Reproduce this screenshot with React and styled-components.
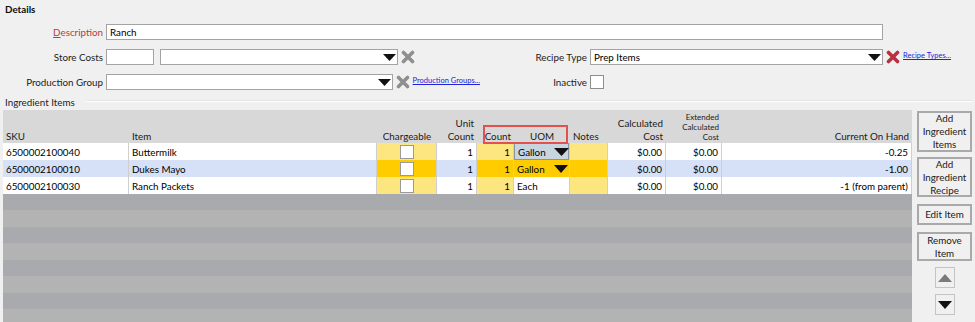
import React from 'react'
import styled, { createGlobalStyle } from 'styled-components'

const GlobalStyle = createGlobalStyle`
  html, body {
    margin: 0;
    padding: 0;
    background: #f0f0f0;
  }
  body {
    font-family: Lato, "Open Sans", sans-serif;
    font-size: 9.8px;
    color: #0d0d0d;
  }
`

const Page = styled.div`
  width: 975px;
  height: 322px;
  overflow: hidden;
  background: #f0f0f0;
  display: flex;
  flex-direction: column;
`

const Heading = styled.div`
  font-weight: 700;
  line-height: 13px;
  height: 13px;
  padding: 3px 0 0 5px;
`

const Form = styled.div`
  display: grid;
  grid-template-columns: 98px 374px 104px 1fr;
  grid-auto-rows: 16px;
  column-gap: 3px;
  row-gap: 9px;
  margin-top: 8px;
  padding-left: 5px;
`

const Label = styled.div`
  display: flex;
  align-items: center;
  justify-content: flex-end;
  white-space: nowrap;
  color: ${({ $accent }) => ($accent ? '#b23c44' : '#222')};
  margin-top: -1px;
`

const Controls = styled.div`
  display: flex;
  align-items: center;
  gap: ${({ $gap }) => $gap ?? 3}px;
  grid-column: ${({ $span }) => $span || 'auto'};
`

const TextBox = styled.div`
  box-sizing: border-box;
  width: ${({ $w }) => $w}px;
  height: 16px;
  background: #fff;
  border: 1px solid #a3a3a3;
  display: flex;
  align-items: center;
  padding: 0 3px;
  color: #000;
`

const ComboArrow = styled.svg`
  margin-left: auto;
  margin-right: -2px;
  flex: none;
`

const Link = styled.a`
  align-self: flex-start;
  margin-top: 2px;
  font-size: 7.5px;
  color: #2222dd;
  text-decoration: underline;
  white-space: nowrap;
`

const CheckBox = styled.div`
  box-sizing: border-box;
  width: 14px;
  height: 14px;
  background: #fff;
  border: 1px solid #8e8e8e;
`

const SectionTitle = styled.div`
  display: flex;
  align-items: center;
  gap: 11px;
  height: 12px;
  margin-top: 6px;
  padding: 0 3px 0 5px;
  color: #222;
  &::after {
    content: '';
    flex: 1;
    height: 1px;
    background: #fff;
    border-top: 1px solid #e4e4e4;
    margin-top: -3px;
  }
`

const Main = styled.div`
  flex: 1;
  min-height: 0;
  display: flex;
  gap: 5px;
  margin-top: 2px;
  padding-left: 3px;
`

const GridBox = styled.div`
  position: relative;
  width: 909px;
  display: flex;
  flex-direction: column;
`

const COLS = '126px 248px 60px 40px 37px 56px 38px 58px 56px 190px'

const HeaderRow = styled.div`
  display: grid;
  grid-template-columns: ${COLS};
  height: 33px;
  background: #d8d8d8;
`

const HeaderCell = styled.div`
  display: flex;
  align-items: flex-end;
  justify-content: ${({ $align }) => $align || 'flex-start'};
  text-align: ${({ $align }) => ($align === 'flex-end' ? 'right' : $align === 'center' ? 'center' : 'left')};
  padding: 0 3px ${({ $small }) => ($small ? '1px' : '0')};
  font-size: ${({ $small }) => ($small ? '8px' : '9.8px')};
  line-height: ${({ $small }) => ($small ? '10px' : '13px')};
  color: #1a1a1a;
`

const DataRow = styled.div`
  display: grid;
  grid-template-columns: ${COLS};
  height: 17px;
`

const Cell = styled.div`
  box-sizing: border-box;
  display: flex;
  align-items: center;
  justify-content: ${({ $align }) => $align || 'flex-start'};
  padding: ${({ $flush }) => ($flush ? '0' : '0 3px')};
  background: ${({ $bg }) => $bg || '#fff'};
  border-right: 1px solid #cfcfcf;
  white-space: nowrap;
  overflow: hidden;
  color: #000;
`

const Editor = styled.div`
  box-sizing: border-box;
  width: 100%;
  height: 17px;
  display: flex;
  align-items: center;
  padding: 0 1px 0 3px;
  background: #c8d4e0;
  border: 1px solid #8795a3;
`

const CellCheck = styled.div`
  box-sizing: border-box;
  width: 14px;
  height: 14px;
  background: #fff;
  border: 1px solid #9a9a9a;
`

const Filler = styled.div`
  flex: 1;
  background: repeating-linear-gradient(
    to bottom,
    #a9aaad 0 16.5px,
    #b3b3b3 16.5px 33px
  );
`

const Highlight = styled.div`
  position: absolute;
  left: 480px;
  top: 15px;
  width: 85px;
  height: 19px;
  box-sizing: border-box;
  border: 2px solid #e25050;
  pointer-events: none;
`

const Side = styled.div`
  width: 55px;
  display: flex;
  flex-direction: column;
  align-items: center;
  padding-top: 1px;
`

const SideButton = styled.div`
  box-sizing: border-box;
  width: 55px;
  height: ${({ $h }) => $h}px;
  margin-bottom: ${({ $mb }) => $mb}px;
  border: 2px solid #a9a9a9;
  background: #f0f0f0;
  display: flex;
  align-items: center;
  justify-content: center;
  text-align: center;
  line-height: 13px;
  color: #1a1a1a;
`

const ArrowButton = styled.div`
  box-sizing: border-box;
  width: 20px;
  height: 21px;
  margin-bottom: 6px;
  border: 1px solid #c4c4c4;
  background: #f0f0f0;
  display: flex;
  align-items: center;
  justify-content: center;
`

const Arrow = ({ w = 13, h = 7 }) => (
  <ComboArrow width={w} height={h} viewBox={`0 0 ${w} ${h}`}>
    <polygon points={`0,0 ${w},0 ${w / 2},${h}`} fill="#111" />
  </ComboArrow>
)

const XIcon = ({ color }) => (
  <svg width="14" height="14" viewBox="0 0 14 14" style={{ flex: 'none' }}>
    <path d="M2.5 2.5 L11.5 11.5 M11.5 2.5 L2.5 11.5" stroke={color} strokeWidth="3.6" strokeLinecap="round" />
  </svg>
)

const YELLOW = '#fde580'
const GOLD = '#ffcc00'
const BLUE = '#d6e0f7'

const rows = [
  { sku: '6500002100040', item: 'Buttermilk', uom: 'Gallon', coh: '-0.25', editor: true },
  { sku: '6500002100010', item: 'Dukes Mayo', uom: 'Gallon', coh: '-1.00', selected: true },
  { sku: '6500002100030', item: 'Ranch Packets', uom: 'Each', coh: '-1 (from parent)' },
]

const GridRow = ({ r }) => {
  const base = r.selected ? BLUE : '#fff'
  const yel = r.selected ? GOLD : YELLOW
  return (
    <DataRow>
      <Cell $bg={base}>{r.sku}</Cell>
      <Cell $bg={base}>{r.item}</Cell>
      <Cell $bg={yel} $align="center"><CellCheck /></Cell>
      <Cell $bg={base} $align="flex-end">1</Cell>
      <Cell $bg={yel} $align="flex-end">1</Cell>
      {r.editor ? (
        <Cell $bg="#fff" $flush>
          <Editor>{r.uom}<Arrow w={15} h={8} /></Editor>
        </Cell>
      ) : (
        <Cell $bg={r.selected ? GOLD : '#fff'}>
          {r.uom}
          {r.selected && <Arrow w={14} h={8} />}
        </Cell>
      )}
      <Cell $bg={yel} />
      <Cell $bg={base} $align="flex-end">$0.00</Cell>
      <Cell $bg={base} $align="flex-end">$0.00</Cell>
      <Cell $bg={base} $align="flex-end">{r.coh}</Cell>
    </DataRow>
  )
}

export default function App() {
  return (
    <Page>
      <GlobalStyle />
      <Heading>Details</Heading>
      <Form>
        <Label $accent><span><u>D</u>escription</span></Label>
        <Controls $span="2 / 5">
          <TextBox $w={777}>Ranch</TextBox>
        </Controls>

        <Label>Store Costs</Label>
        <Controls>
          <TextBox $w={48} />
          <TextBox $w={238} style={{ marginLeft: 3 }}><Arrow /></TextBox>
          <XIcon color="#8f8f8f" />
        </Controls>
        <Label>Recipe Type</Label>
        <Controls>
          <TextBox $w={293}>Prep Items<Arrow /></TextBox>
          <XIcon color="#b8313f" />
          <Link>Recipe Types...</Link>
        </Controls>

        <Label>Production Group</Label>
        <Controls>
          <TextBox $w={292}><Arrow /></TextBox>
          <XIcon color="#8f8f8f" />
          <Link>Production Groups...</Link>
        </Controls>
        <Label>Inactive</Label>
        <Controls>
          <CheckBox />
        </Controls>
      </Form>

      <SectionTitle>Ingredient Items</SectionTitle>

      <Main>
        <GridBox>
          <HeaderRow>
            <HeaderCell>SKU</HeaderCell>
            <HeaderCell>Item</HeaderCell>
            <HeaderCell $align="center">Chargeable</HeaderCell>
            <HeaderCell $align="flex-end">Unit<br />Count</HeaderCell>
            <HeaderCell $align="flex-end">Count</HeaderCell>
            <HeaderCell $align="center">UOM</HeaderCell>
            <HeaderCell>Notes</HeaderCell>
            <HeaderCell $align="flex-end">Calculated<br />Cost</HeaderCell>
            <HeaderCell $align="flex-end" $small>Extended<br />Calculated<br />Cost</HeaderCell>
            <HeaderCell $align="flex-end">Current On Hand</HeaderCell>
          </HeaderRow>
          {rows.map((r) => (
            <GridRow key={r.sku} r={r} />
          ))}
          <Filler />
          <Highlight />
        </GridBox>

        <Side>
          <SideButton $h={41} $mb={5}>Add<br />Ingredient<br />Items</SideButton>
          <SideButton $h={40} $mb={7}>Add<br />Ingredient<br />Recipe</SideButton>
          <SideButton $h={21} $mb={7}>Edit Item</SideButton>
          <SideButton $h={29} $mb={6}>Remove<br />Item</SideButton>
          <ArrowButton>
            <svg width="14" height="8" viewBox="0 0 14 8"><polygon points="0,8 14,8 7,0" fill="#7a7a7a" /></svg>
          </ArrowButton>
          <ArrowButton>
            <svg width="14" height="8" viewBox="0 0 14 8"><polygon points="0,0 14,0 7,8" fill="#111" /></svg>
          </ArrowButton>
        </Side>
      </Main>
    </Page>
  )
}
